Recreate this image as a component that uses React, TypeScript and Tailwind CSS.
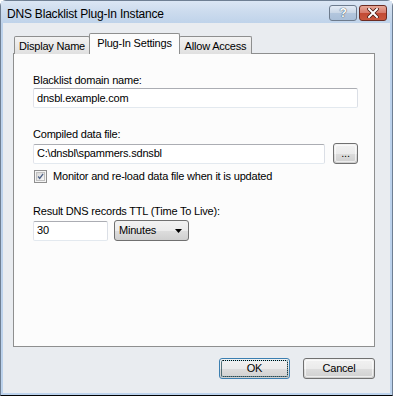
import React from "react";

const font = { fontFamily: '"Liberation Sans", Arial, sans-serif' };

function Btn({ children, w, focus }: { children: React.ReactNode; w: string; focus?: boolean }) {
  return (
    <div
      className={`${w} h-[21px] rounded-[3px] border ${focus ? "border-[#3c7fb1]" : "border-[#707070]"} p-[1px]`}
      style={{ background: "linear-gradient(#f2f2f2 0%, #ebebeb 50%, #dddddd 51%, #cfcfcf 100%)" }}
    >
      <div className={`h-full w-full rounded-[2px] flex items-center justify-center text-[11px] text-black ${focus ? "outline outline-1 outline-dotted outline-black -outline-offset-1 border border-[#48d8fb]/40" : "border border-white/60"}`}>
        {children}
      </div>
    </div>
  );
}

function TextBox({ w, value }: { w: string; value: string }) {
  return (
    <div className={`${w} h-[20px] bg-white border border-t-[#abadb3] border-l-[#e2e3ea] border-r-[#dbdfe6] border-b-[#e3e9ef] rounded-[2px] flex items-center pl-[3px] text-[11px] text-black`}>
      {value}
    </div>
  );
}

export default function App() {
  return (
    <div className="w-[393px] h-[396px] relative overflow-hidden tracking-[-0.2px]" style={font}>
      <div className="w-[393px] h-[396px] flex flex-col bg-[#bcd2ec] border border-[#6f7f93] rounded-t-[6px] border-b-black">
        {/* Title bar */}
        <div
          className="h-[22px] shrink-0 flex items-center relative"
          style={{ background: "linear-gradient(#dbe6f4 0%, #cddcee 45%, #bfd3ea 100%)" }}
        >
          <span className="ml-[6px] mt-[3px] text-[12px] text-black">DNS Blacklist Plug-In Instance</span>
          <div className="absolute right-[5px] top-[4px] flex gap-[2px]">
            <div
              className="w-[28px] h-[16px] rounded-[3px] border border-[#6d7b8d] flex items-center justify-center"
              style={{ background: "linear-gradient(#e3ebf5 0%, #c9d6e6 50%, #b3c6dd 51%, #a9bfd9 100%)" }}
            >
              <span className="text-[12px] font-bold text-white leading-none" style={{ textShadow: "0 0 1px #394a5e, 0 0 1px #394a5e" }}>?</span>
            </div>
            <div
              className="w-[28px] h-[16px] rounded-[3px] border border-[#6b2c23] flex items-center justify-center"
              style={{ background: "linear-gradient(#e7a898 0%, #d6796a 50%, #c24a34 51%, #c9573e 100%)" }}
            >
              <svg width="12" height="10" viewBox="0 0 12 10">
                <path d="M2 1 L10 9 M10 1 L2 9" stroke="#4a1a12" strokeWidth="3.6" strokeLinecap="square" />
                <path d="M2 1 L10 9 M10 1 L2 9" stroke="#ffffff" strokeWidth="2" strokeLinecap="square" />
              </svg>
            </div>
          </div>
        </div>
        {/* Client area */}
        <div className="flex-1 ml-[2px] mr-[2px] mb-[2px] bg-[#e9ecf0] flex flex-col pl-[10px] pt-[10px]">
          {/* Tabs */}
          <div className="flex items-end h-[21px] relative z-10 text-[11px] text-black">
            <div
              className="h-[18px] w-[76px] ml-[1px] flex items-center justify-center border border-[#8e8f8f] border-b-0 rounded-t-[2px] pt-[1px]"
              style={{ background: "linear-gradient(#f3f3f3, #e0e0e0)" }}
            >
              Display Name
            </div>
            <div className="h-[21px] w-[91px] -ml-[1px] flex items-center justify-center border border-[#8e8f8f] border-b-0 bg-[#fcfcfc] rounded-t-[2px] pb-[1px] relative z-10">
              Plug-In Settings
            </div>
            <div
              className="h-[18px] w-[73px] -ml-[1px] flex items-center justify-center border border-[#8e8f8f] border-b-0 rounded-t-[2px] pt-[1px]"
              style={{ background: "linear-gradient(#f3f3f3, #e0e0e0)" }}
            >
              Allow Access
            </div>
          </div>
          {/* Panel */}
          <div className="w-[362px] h-[294px] -mt-[1px] border border-[#8e8f8f] bg-[#fcfcfc] pl-[19px] pt-[19px] text-[11px] text-black">
            <div className="h-[14px] leading-[14px]">Blacklist domain name:</div>
            <div className="mt-[1px]">
              <TextBox w="w-[325px]" value="dnsbl.example.com" />
            </div>
            <div className="mt-[19px] h-[14px] leading-[14px]">Compiled data file:</div>
            <div className="mt-[2px] flex items-center">
              <TextBox w="w-[292px]" value="C:\dnsbl\spammers.sdnsbl" />
              <div className="ml-[8px]">
                <Btn w="w-[25px]">...</Btn>
              </div>
            </div>
            <div className="mt-[5px] flex items-center h-[14px]">
              <div
                className="w-[13px] h-[13px] border border-[#8f8f8f] flex items-center justify-center p-[1px] ml-[1px]"
                style={{ background: "#f4f4f4" }}
              >
                <div className="w-full h-full border border-[#c0c0c0] flex items-center justify-center" style={{ background: "linear-gradient(135deg, #d8d8d8, #f8f8f8)" }}>
                  <svg width="9" height="9" viewBox="0 0 9 9">
                    <path d="M1.5 4.5 L3.5 7 L7.8 1" stroke="#4d6185" strokeWidth="1.6" fill="none" />
                  </svg>
                </div>
              </div>
              <span className="ml-[6px]">Monitor and re-load data file when it is updated</span>
            </div>
            <div className="mt-[21px] h-[14px] leading-[14px]">Result DNS records TTL (Time To Live):</div>
            <div className="mt-[2px] flex items-center">
              <TextBox w="w-[75px]" value="30" />
              <div
                className="ml-[6px] w-[75px] h-[21px] rounded-[3px] border border-[#707070] flex items-center justify-between pl-[4px] pr-[6px]"
                style={{ background: "linear-gradient(#f2f2f2 0%, #ebebeb 50%, #dddddd 51%, #cfcfcf 100%)" }}
              >
                <span>Minutes</span>
                <svg width="7" height="4" viewBox="0 0 7 4">
                  <path d="M0 0 H7 L3.5 4 Z" fill="#000" />
                </svg>
              </div>
            </div>
          </div>
          {/* Buttons */}
          <div className="flex justify-end mt-[11px] w-[362px] gap-[13px]">
            <Btn w="w-[71px]" focus>
              OK
            </Btn>
            <Btn w="w-[72px]">Cancel</Btn>
          </div>
        </div>
      </div>
    </div>
  );
}
